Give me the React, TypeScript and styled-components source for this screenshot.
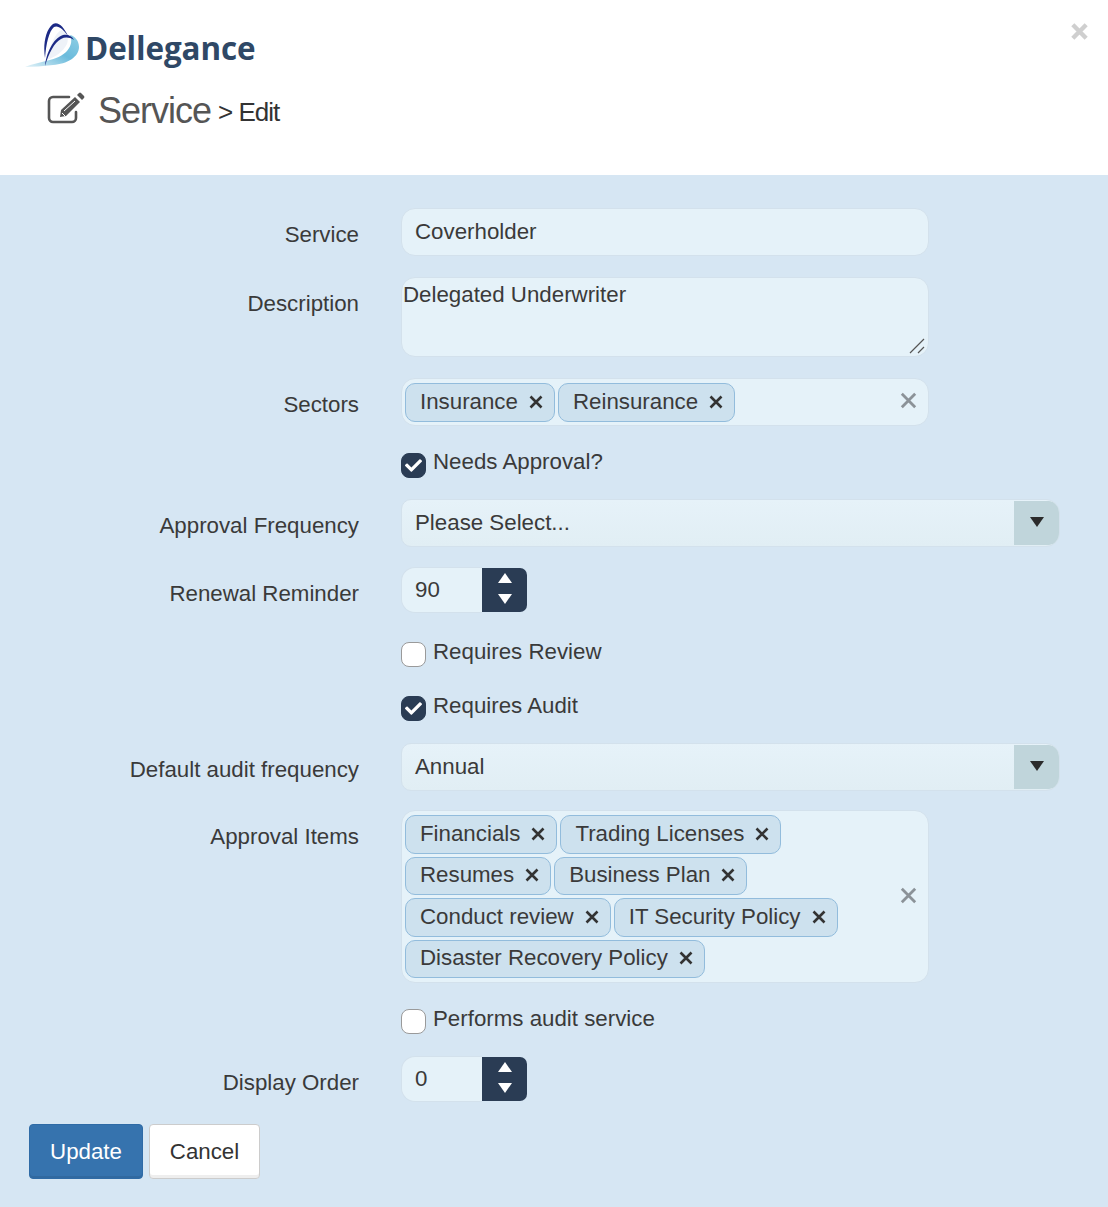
import styled, { createGlobalStyle } from 'styled-components';
import { FaCheck } from 'react-icons/fa';

const GlobalStyle = createGlobalStyle`
  html, body {
    margin: 0;
    padding: 0;
    background: #d6e6f3;
    font-family: "Liberation Sans", Arial, sans-serif;
    font-size: 22.3px;
    color: #3a3a3a;
  }
`;

const Page = styled.div`
  width: 1108px;
  height: 1207px;
  overflow: hidden;
  position: relative;
`;

const Header = styled.header`
  height: 175px;
  box-sizing: border-box;
  background: #fff;
  padding: 22px 0 0 25px;
`;

const CloseButton = styled.span`
  position: absolute;
  top: 23px;
  right: 20px;
  color: #cfcfcf;
  display: flex;
`;

const Logo = styled.div`
  display: flex;
  align-items: center;
  height: 50px;
`;

const LogoText = styled.span`
  font-family: "Open Sans", sans-serif;
  font-weight: 700;
  font-size: 31.4px;
  letter-spacing: -0.1px;
  color: #2f4866;
  margin-left: 4px;
`;

const Title = styled.div`
  display: flex;
  align-items: baseline;
  margin: 18px 0 0 22px;
  color: #555;
`;

const TitleIcon = styled.svg`
  width: 40px;
  height: 32px;
  align-self: center;
  margin: 0 11px 6px 0;
`;

const TitleMain = styled.span`
  font-size: 36px;
  letter-spacing: -1px;
`;

const TitleSub = styled.span`
  font-size: 26px;
  letter-spacing: -1px;
  color: #333;
  margin-left: 7px;
  transform: translateY(-2px);
`;

const Form = styled.div`
  padding: 33px 0 0 29px;
`;

const Row = styled.div<{ $gap?: number }>`
  display: flex;
  align-items: flex-start;
  margin-bottom: ${(p) => p.$gap ?? 21}px;
`;

const Label = styled.label`
  width: 330px;
  text-align: right;
  flex: none;
  padding-top: 14px;
  margin-right: 42px;
  line-height: 25px;
`;

const field = `
  box-sizing: border-box;
  background: #e5f2f9;
  border: 1px solid #d3e1ec;
  border-radius: 14px;
`;

const TextField = styled.div`
  ${field}
  width: 528px;
  height: 48px;
  padding: 10px 13px;
  line-height: 25px;
`;

const TextArea = styled.div`
  ${field}
  position: relative;
  width: 528px;
  height: 80px;
  padding: 4px 1px;
  line-height: 25px;
`;

const Grip = styled.svg`
  position: absolute;
  right: 2px;
  bottom: 2px;
`;

const TagBox = styled.div<{ $height: number }>`
  ${field}
  position: relative;
  display: flex;
  flex-wrap: wrap;
  align-content: flex-start;
  gap: 3px;
  width: 528px;
  height: ${(p) => p.$height}px;
  padding: 4px 40px 3px 3px;
`;

const Tag = styled.span`
  box-sizing: border-box;
  display: flex;
  align-items: center;
  justify-content: space-between;
  height: 38.5px;
  padding: 0 11px 2px 14px;
  background: #cde1ee;
  border: 1px solid #92bcdc;
  border-radius: 10px;
  line-height: 25px;
`;

const TagRemove = styled.span`
  display: flex;
  margin: 1px 0 0 11px;
`;

const ClearAll = styled.svg`
  position: absolute;
  right: 11px;
  top: 50%;
  transform: translateY(calc(-50% - 1.5px));
`;

const Select = styled.div`
  ${field}
  width: 659px;
  height: 48px;
  display: flex;
  justify-content: space-between;
  overflow: hidden;
  background: linear-gradient(#e6f2f9, #e1eef4);
  border-radius: 10px 14px 14px 10px;
  padding-left: 13px;
  line-height: 45px;
`;

const SelectArrow = styled.span`
  flex: none;
  width: 45px;
  margin: 1px 0 1px 0;
  background: #c0d5db;
  border-radius: 0 10px 10px 0;
  display: flex;
  align-items: center;
  justify-content: center;
  padding-bottom: 3px;
  box-sizing: border-box;
`;

const Arrow = styled.i<{ $up?: boolean; $color?: string }>`
  width: 0;
  height: 0;
  border-left: 7px solid transparent;
  border-right: 7px solid transparent;
  ${(p) => (p.$up ? 'border-bottom' : 'border-top')}: 10px solid ${(p) => p.$color ?? '#2b2b2b'};
`;

const Spinner = styled.div`
  display: flex;
  width: 126px;
  height: 46px;
`;

const SpinnerValue = styled.div`
  box-sizing: border-box;
  width: 81px;
  background: #e5f2f9;
  border: 1px solid #d3e1ec;
  border-right: 0;
  border-radius: 14px 0 0 14px;
  padding: 9px 13px;
  line-height: 25px;
`;

const SpinnerButtons = styled.div`
  box-sizing: border-box;
  width: 45px;
  margin: 1px 0;
  padding-bottom: 3px;
  background: #2a3c54;
  border-radius: 0 7px 7px 0;
  display: flex;
  flex-direction: column;
  align-items: center;
  justify-content: center;
  gap: 11px;
`;

const CheckRow = styled.div<{ $gap?: number }>`
  display: flex;
  margin-left: 372px;
  margin-bottom: ${(p) => p.$gap ?? 21}px;
  height: 27px;
`;

const CheckBox = styled.span<{ $checked?: boolean }>`
  box-sizing: border-box;
  width: 25px;
  height: 25px;
  margin-top: 2px;
  border-radius: 8px;
  display: flex;
  align-items: center;
  justify-content: center;
  color: #fff;
  background: ${(p) => (p.$checked ? '#2a3c54' : '#fff')};
  border: 1px solid ${(p) => (p.$checked ? '#2a3c54' : '#9a9a9a')};
`;

const CheckLabel = styled.span<{ $top?: number }>`
  margin: ${(p) => p.$top ?? -1}px 0 0 7px;
  line-height: 25px;
`;

const Buttons = styled.div`
  display: flex;
  gap: 6px;
`;

const Button = styled.button<{ $primary?: boolean }>`
  box-sizing: border-box;
  height: 55px;
  font: inherit;
  border-radius: 4px;
  padding: 0;
  width: ${(p) => (p.$primary ? 114 : 111)}px;
  background: ${(p) => (p.$primary ? '#3673ae' : '#fff')};
  color: ${(p) => (p.$primary ? '#fff' : '#333')};
  border: 1px solid ${(p) => (p.$primary ? '#2f6ba6' : '#ccc')};
  box-shadow: ${(p) => (p.$primary ? 'inset 0 -2px 0 #3169a0' : 'inset 0 -3px 0 #eee')};
`;

const Cross = ({ size, color, width }: { size: number; color: string; width: number }) => (
  <svg width={size} height={size} viewBox="0 0 14 14">
    <path d="M1.5 1.5l11 11M12.5 1.5l-11 11" stroke={color} strokeWidth={width} fill="none" />
  </svg>
);

const Tags = ({ items, height }: { items: string[]; height: number }) => (
  <TagBox $height={height}>
    {items.map((t) => (
      <Tag key={t}>
        {t}
        <TagRemove>
          <Cross size={14} color="#333" width={2.6} />
        </TagRemove>
      </Tag>
    ))}
    <ClearAll width="17" height="17" viewBox="0 0 14 14">
      <path d="M1.5 1.5l11 11M12.5 1.5l-11 11" stroke="#8b9298" strokeWidth="2.3" fill="none" />
    </ClearAll>
  </TagBox>
);

const Check = ({ label, checked, gap, top }: { label: string; checked?: boolean; gap?: number; top?: number }) => (
  <CheckRow $gap={gap}>
    <CheckBox $checked={checked}>{checked && <FaCheck size={17} />}</CheckBox>
    <CheckLabel $top={top}>{label}</CheckLabel>
  </CheckRow>
);

const NumberBox = ({ value }: { value: string }) => (
  <Spinner>
    <SpinnerValue>{value}</SpinnerValue>
    <SpinnerButtons>
      <Arrow $up $color="#fff" />
      <Arrow $color="#fff" />
    </SpinnerButtons>
  </Spinner>
);

const SelectBox = ({ value }: { value: string }) => (
  <Select>
    {value}
    <SelectArrow>
      <Arrow />
    </SelectArrow>
  </Select>
);

const LogoMark = () => (
  <svg width="56" height="50" viewBox="0 2 56 50">
    <defs>
      <linearGradient id="wing" x1="0" y1="1" x2="1" y2="0">
        <stop offset="0" stopColor="#e4f3f8" />
        <stop offset="0.55" stopColor="#6bbbdc" />
        <stop offset="1" stopColor="#8fcfe4" />
      </linearGradient>
    </defs>
    <path d="M22 40C24 28 30 12 37 10C42 13 44 18 42 24C38 32 30 37 22 40Z" fill="#eef2f8" />
    <path d="M0 47C14 41 33 41 42 31C47 25 47 20 45 15C50 16 54 21 54 27C54 37 42 44 28 45C18 46 8 47 0 47Z" fill="url(#wing)" />
    <path d="M20 38C18 26 20 10 28 4C33 1 39 7 43 16C38 9 33 5 29 7C24 11 21 24 20 38Z" fill="#1c2a86" />
    <path d="M20 46C21 34 28 18 38 15C43 14 47 16 49 20C44 17 40 17 36 19C29 23 24 33 20 46Z" fill="#1c2a86" />
  </svg>
);

export default function App() {
  return (
    <Page>
      <GlobalStyle />
      <Header>
        <CloseButton>
          <Cross size={17} color="#cfcfcf" width={3.6} />
        </CloseButton>
        <Logo>
          <LogoMark />
          <LogoText>Dellegance</LogoText>
        </Logo>
        <Title>
          <TitleIcon viewBox="0 0 40 32">
            <path d="M29 20v6a4 4 0 0 1-4 4H6a4 4 0 0 1-4-4V9a4 4 0 0 1 4-4h16" fill="none" stroke="#555" strokeWidth="2.6" strokeLinecap="round" />
            <path d="M14 18L28 5l5 5-14 14-6 1z" fill="#555" />
            <path d="M30 3l2-2a1.5 1.5 0 0 1 2 0l3 3a1.5 1.5 0 0 1 0 2l-2 2z" fill="#555" />
            <path d="M17 19l11-10" stroke="#fff" strokeWidth="1" />
            <path d="M15 21l3 3" stroke="#fff" strokeWidth="1" />
          </TitleIcon>
          <TitleMain>Service</TitleMain>
          <TitleSub>&gt; Edit</TitleSub>
        </Title>
      </Header>
      <Form>
        <Row>
          <Label>Service</Label>
          <TextField>Coverholder</TextField>
        </Row>
        <Row>
          <Label>Description</Label>
          <TextArea>
            Delegated Underwriter
            <Grip width="17" height="17" viewBox="0 0 17 17">
              <path d="M1 16L15 2M9 16l6-6" stroke="#555" strokeWidth="1.2" fill="none" />
            </Grip>
          </TextArea>
        </Row>
        <Row $gap={25}>
          <Label>Sectors</Label>
          <Tags height={48} items={['Insurance', 'Reinsurance']} />
        </Row>
        <Check label="Needs Approval?" checked top={-2} />
        <Row $gap={20}>
          <Label>Approval Frequency</Label>
          <SelectBox value="Please Select..." />
        </Row>
        <Row $gap={27}>
          <Label>Renewal Reminder</Label>
          <NumberBox value="90" />
        </Row>
        <Check label="Requires Review" gap={27} />
        <Check label="Requires Audit" checked gap={22} />
        <Row $gap={19}>
          <Label>Default audit frequency</Label>
          <SelectBox value="Annual" />
        </Row>
        <Row $gap={24}>
          <Label>Approval Items</Label>
          <Tags
            height={173}
            items={[
              'Financials',
              'Trading Licenses',
              'Resumes',
              'Business Plan',
              'Conduct review',
              'IT Security Policy',
              'Disaster Recovery Policy',
            ]}
          />
        </Row>
        <Check label="Performs audit service" gap={22} />
        <Row $gap={22}>
          <Label>Display Order</Label>
          <NumberBox value="0" />
        </Row>
        <Buttons>
          <Button $primary>Update</Button>
          <Button>Cancel</Button>
        </Buttons>
      </Form>
    </Page>
  );
}
